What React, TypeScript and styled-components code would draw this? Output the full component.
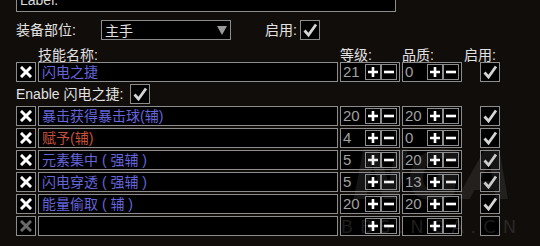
import React from 'react';
import styled, { createGlobalStyle } from 'styled-components';

const GlobalStyle = createGlobalStyle`
    html, body {
        margin: 0;
        padding: 0;
        background: #110d0b;
    }
    body {
        width: 540px;
        height: 246px;
        overflow: hidden;
        font-family: "Liberation Sans", "Noto Sans CJK SC", sans-serif;
        font-size: 14px;
        color: #e2e2e2;
    }
`;

const Page = styled.div`
    position: relative;
    display: flex;
    flex-direction: column;
    padding-left: 16px;
    height: 246px;
    overflow: hidden;
`;

const LabelBox = styled.div`
    box-sizing: border-box;
    width: 380px;
    height: 21px;
    margin-top: -9px;
    border: 1px solid #8c8c8c;
    background: #000;
    padding-left: 3px;
    line-height: 17px;
    color: #d8d8d8;
`;

const SlotRow = styled.div`
    display: flex;
    align-items: center;
    height: 20px;
    margin-top: 8px;
`;

const Caption = styled.span<{ $width?: number; $gap?: number }>`
    display: inline-block;
    width: ${(p) => (p.$width ? `${p.$width}px` : 'auto')};
    margin-right: ${(p) => p.$gap ?? 0}px;
    white-space: nowrap;
    line-height: 20px;
`;

const Select = styled.div`
    box-sizing: border-box;
    display: flex;
    align-items: center;
    justify-content: space-between;
    width: 130px;
    height: 20px;
    border: 1px solid #8c8c8c;
    background: #000;
    padding: 0 3px 0 3px;
    margin-right: 34px;
`;

const Grid = styled.div`
    display: grid;
    grid-template-columns: 20px 300px 60px 60px 14px 20px;
    grid-auto-rows: 20px;
    column-gap: 2px;
    row-gap: 2px;
`;

const HeaderCell = styled.div<{ $col: string }>`
    grid-column: ${(p) => p.$col};
    display: flex;
    align-items: center;
    padding-top: 3px;
    height: 22px;
    white-space: nowrap;
`;

const HeaderRow = styled.div`
    display: contents;
`;

const Box = styled.div`
    box-sizing: border-box;
    height: 20px;
    border: 1px solid #8c8c8c;
    background: #000;
`;

const IconBox = styled(Box)<{ $dim?: boolean }>`
    display: flex;
    align-items: center;
    justify-content: center;
    width: 20px;
    color: ${(p) => (p.$dim ? '#6a6a6a' : '#ffffff')};
`;

const NameField = styled(Box)<{ $tone: 'blue' | 'red' }>`
    padding-left: 3px;
    line-height: 18px;
    white-space: nowrap;
    overflow: hidden;
    color: ${(p) => (p.$tone === 'red' ? '#c4503e' : '#6464dc')};
`;

const NumberField = styled(Box)`
    display: flex;
    align-items: center;
    padding: 0 2px 0 2px;
`;

const NumberText = styled.span`
    flex: 1;
    color: #a0a0a0;
    line-height: 18px;
    font-size: 15px;
`;

const StepButton = styled.div`
    box-sizing: border-box;
    display: flex;
    align-items: center;
    justify-content: center;
    width: 16px;
    height: 16px;
    border: 1px solid #8c8c8c;
    background: #000;
    color: #fff;
`;

const CheckBox = styled(Box)`
    display: flex;
    align-items: center;
    justify-content: center;
    width: 20px;
    color: #d4d4d4;
`;

const EnableCell = styled.div`
    grid-column: 6;
`;

const EnableRow = styled.div`
    grid-column: 1 / -1;
    display: flex;
    align-items: center;
`;

const Watermark = styled.div`
    position: absolute;
    pointer-events: none;
    left: 332px;
    top: 140px;
    width: 200px;
    display: flex;
    flex-direction: column;
    align-items: center;
    color: rgba(150, 150, 150, 0.14);
    font-family: "DejaVu Sans", sans-serif;
`;

const WatermarkLogo = styled.div`
    font-size: 68px;
    font-weight: 700;
    font-style: italic;
    letter-spacing: -2px;
    line-height: 72px;
`;

const WatermarkSite = styled.div`
    font-size: 18px;
    letter-spacing: 7px;
    line-height: 22px;
    color: rgba(150, 150, 150, 0.2);
    margin-top: 4px;
`;

const Cross = () => (
    <svg width="12" height="12" viewBox="0 0 12 12">
        <path d="M2 2 L10 10 M10 2 L2 10" stroke="currentColor" strokeWidth="3" strokeLinecap="square" />
    </svg>
);

const Check = () => (
    <svg width="16" height="16" viewBox="0 0 16 16">
        <path d="M2.5 8.5 L6.5 13 L14 2.5" fill="none" stroke="currentColor" strokeWidth="2.8" strokeLinejoin="miter" />
    </svg>
);

const Plus = () => (
    <svg width="12" height="12" viewBox="0 0 12 12">
        <path d="M6 1 V11 M1 6 H11" stroke="currentColor" strokeWidth="2.6" />
    </svg>
);

const Minus = () => (
    <svg width="12" height="12" viewBox="0 0 12 12">
        <path d="M1 6 H11" stroke="currentColor" strokeWidth="2.6" />
    </svg>
);

const Triangle = () => (
    <svg width="10" height="9" viewBox="0 0 10 9">
        <path d="M0 0 H10 L5 9 Z" fill="#9a9a9a" />
    </svg>
);

interface Gem {
    name: string;
    tone: 'blue' | 'red';
    level: string;
    quality: string;
    enabled: boolean;
    empty?: boolean;
}

const gems: Gem[] = [
    { name: '暴击获得暴击球(辅)', tone: 'blue', level: '20', quality: '20', enabled: true },
    { name: '赋予(辅)', tone: 'red', level: '4', quality: '0', enabled: true },
    { name: '元素集中 ( 强辅 )', tone: 'blue', level: '5', quality: '20', enabled: true },
    { name: '闪电穿透 ( 强辅 )', tone: 'blue', level: '5', quality: '13', enabled: true },
    { name: '能量偷取 ( 辅 )', tone: 'blue', level: '20', quality: '20', enabled: true },
    { name: '', tone: 'blue', level: '', quality: '', enabled: false, empty: true },
];

const Stepper = ({ value }: { value: string }) => (
    <NumberField>
        <NumberText>{value}</NumberText>
        <StepButton><Plus /></StepButton>
        <StepButton><Minus /></StepButton>
    </NumberField>
);

const GemRow = ({ gem }: { gem: Gem }) => (
    <>
        <IconBox $dim={gem.empty}><Cross /></IconBox>
        <NameField $tone={gem.tone}>{gem.name}</NameField>
        <Stepper value={gem.level} />
        <Stepper value={gem.quality} />
        <EnableCell>
            <CheckBox>{gem.enabled && <Check />}</CheckBox>
        </EnableCell>
    </>
);

export default function App() {
    return (
        <>
            <GlobalStyle />
            <Page>
                <LabelBox>Label.</LabelBox>
                <SlotRow>
                    <Caption $width={85}>装备部位:</Caption>
                    <Select>
                        <span>主手</span>
                        <Triangle />
                    </Select>
                    <Caption $gap={3}>启用:</Caption>
                    <CheckBox><Check /></CheckBox>
                </SlotRow>
                <Grid>
                    <HeaderRow>
                        <HeaderCell $col="2">技能名称:</HeaderCell>
                        <HeaderCell $col="3">等级:</HeaderCell>
                        <HeaderCell $col="4">品质:</HeaderCell>
                        <HeaderCell $col="5 / 7">启用:</HeaderCell>
                    </HeaderRow>
                    <GemRow gem={{ name: '闪电之捷', tone: 'blue', level: '21', quality: '0', enabled: true }} />
                    <EnableRow>
                        <Caption $width={114}>Enable 闪电之捷:</Caption>
                        <CheckBox><Check /></CheckBox>
                    </EnableRow>
                    {gems.map((gem, i) => (
                        <GemRow key={i} gem={gem} />
                    ))}
                </Grid>
                <Watermark>
                    <WatermarkLogo>NGA</WatermarkLogo>
                    <WatermarkSite>BBS.NGA.CN</WatermarkSite>
                </Watermark>
            </Page>
        </>
    );
}
